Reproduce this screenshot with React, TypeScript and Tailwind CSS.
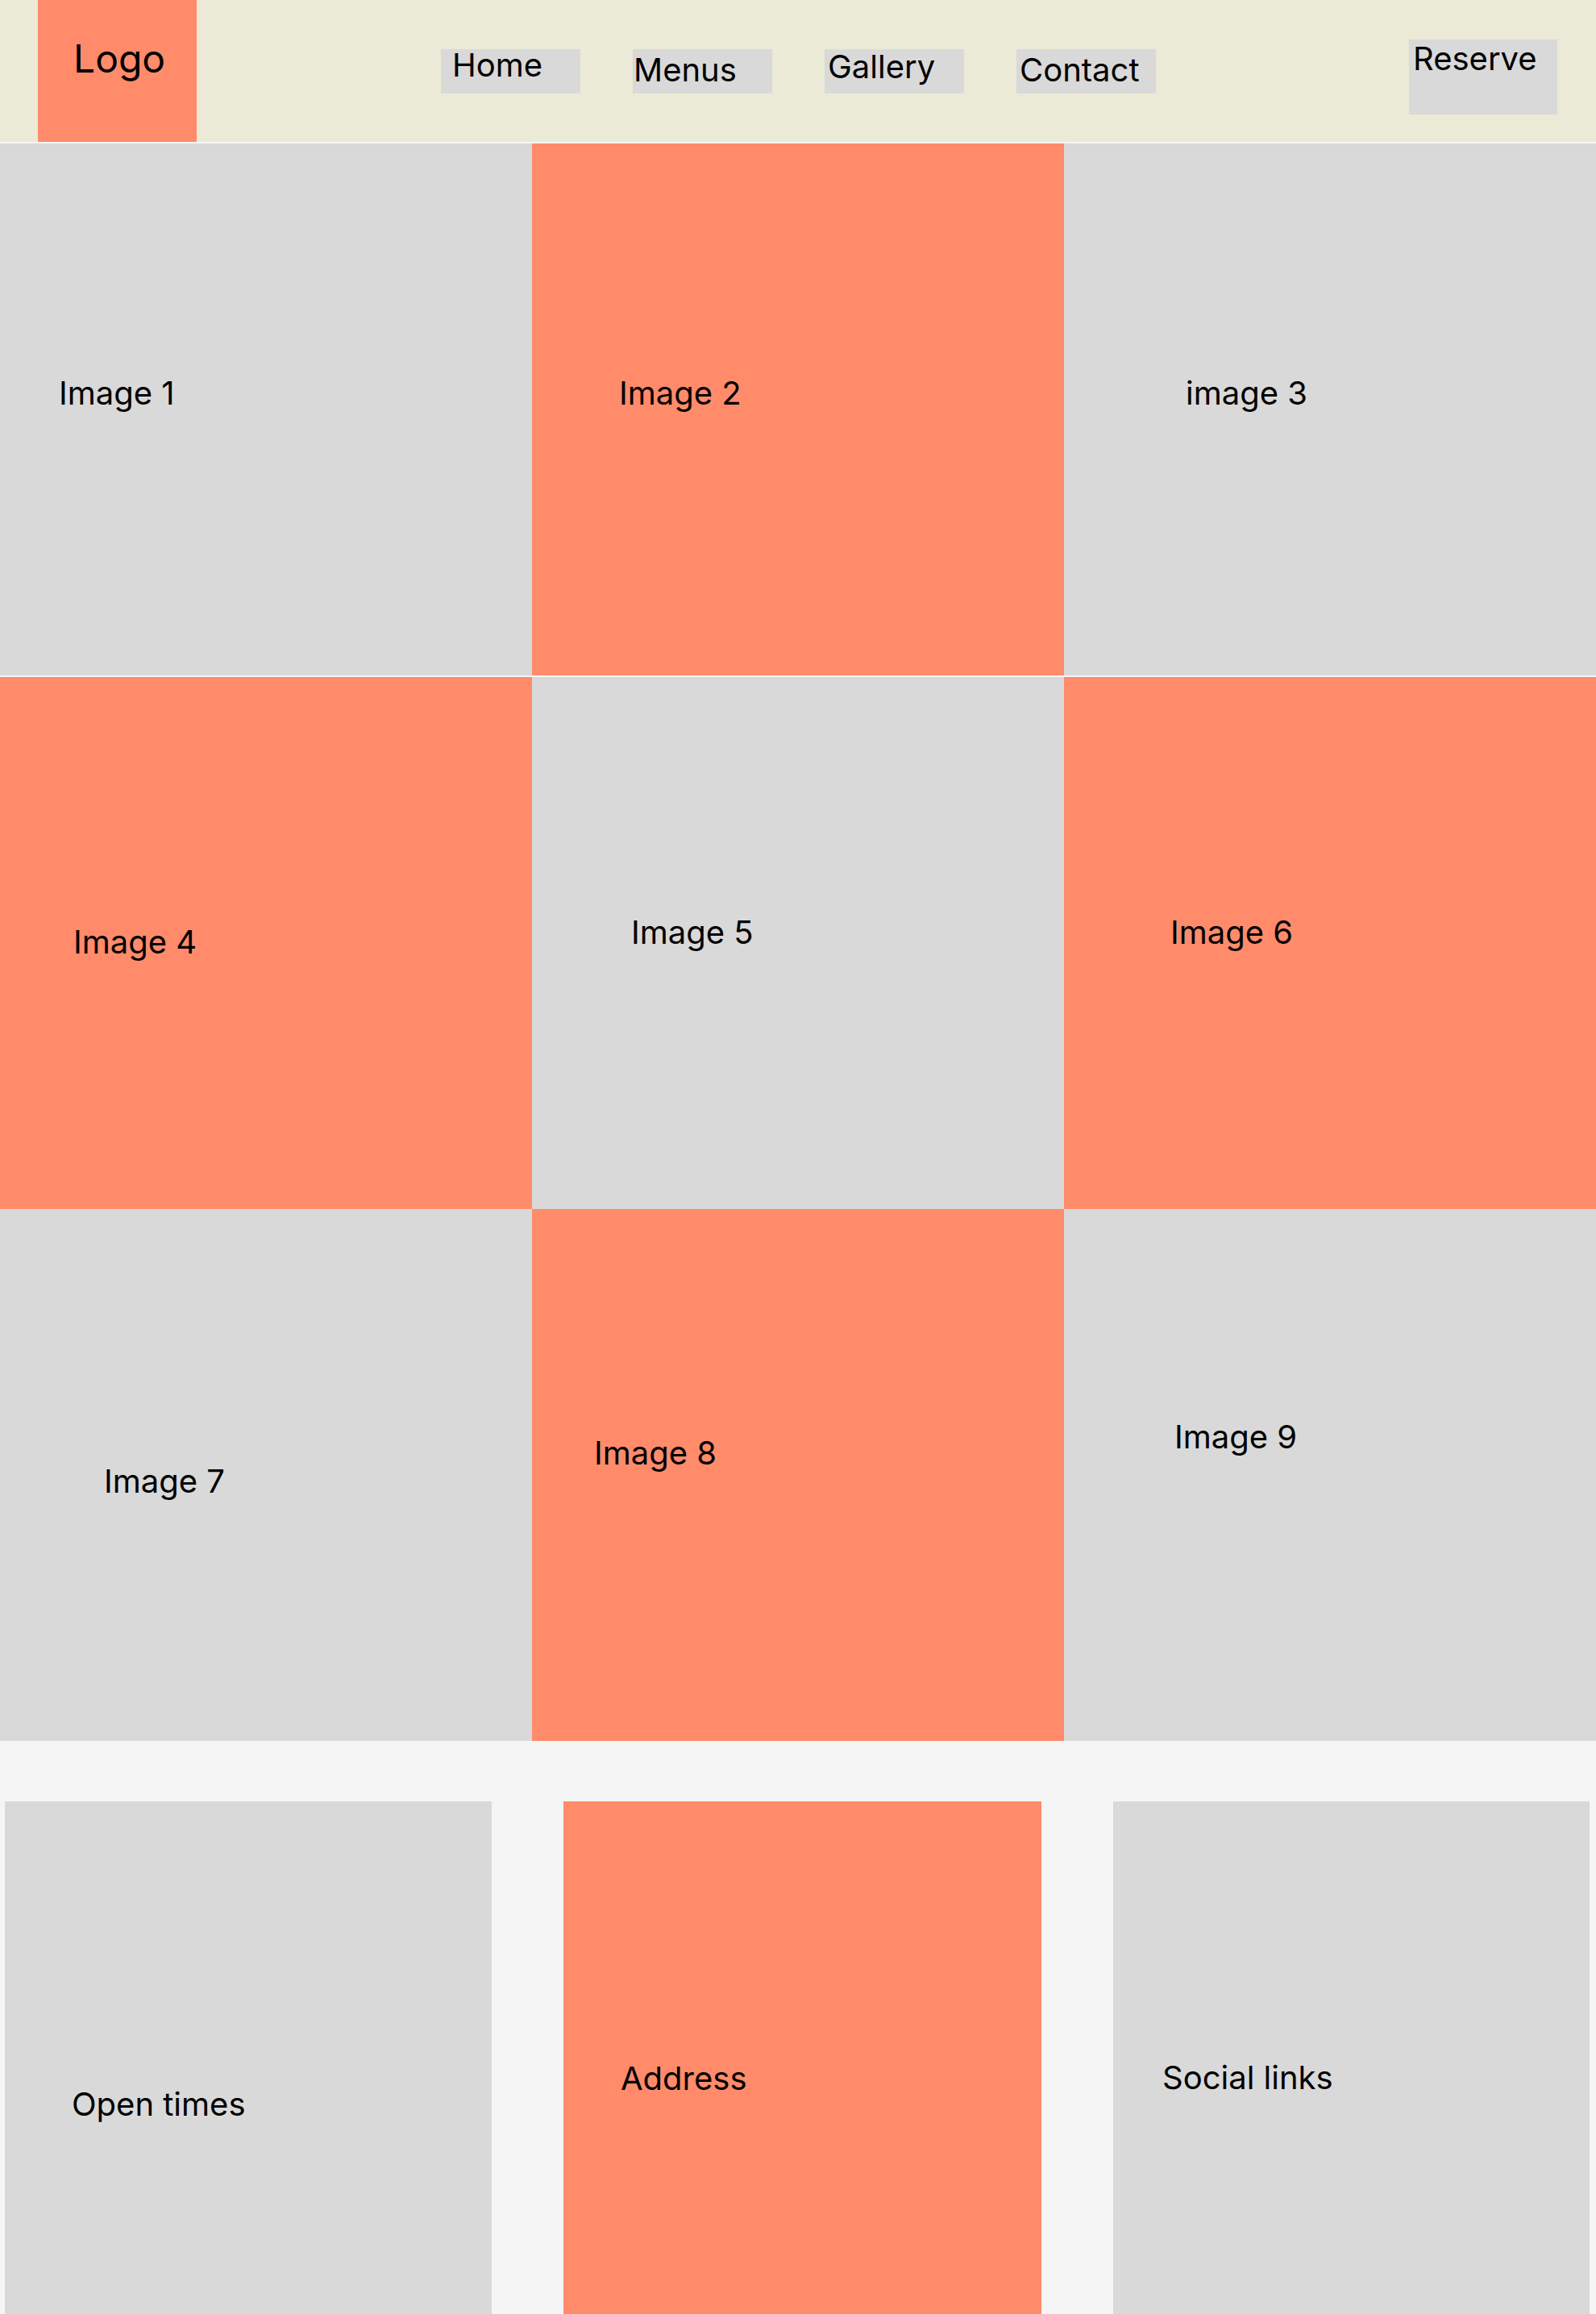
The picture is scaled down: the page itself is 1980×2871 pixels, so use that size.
import React from 'react';

const ORANGE = 'bg-[#ff8b6b]';
const GRAY = 'bg-[#d9d9d9]';

type Tile = { label: string; orange: boolean; pad: string };

const rows: Tile[][] = [
  [
    { label: 'Image 1', orange: false, pad: 'pl-[73px] pt-[280px]' },
    { label: 'Image 2', orange: true, pad: 'pl-[108px] pt-[280px]' },
    { label: 'image 3', orange: false, pad: 'pl-[151px] pt-[280px]' },
  ],
  [
    { label: 'Image 4', orange: true, pad: 'pl-[91px] pt-[299px]' },
    { label: 'Image 5', orange: false, pad: 'pl-[123px] pt-[287px]' },
    { label: 'Image 6', orange: true, pad: 'pl-[132px] pt-[287px]' },
  ],
  [
    { label: 'Image 7', orange: false, pad: 'pl-[129px] pt-[308px]' },
    { label: 'Image 8', orange: true, pad: 'pl-[77px] pt-[273px]' },
    { label: 'Image 9', orange: false, pad: 'pl-[137px] pt-[253px]' },
  ],
];

const navItems = [
  { label: 'Home', pad: 'pl-[14px] pt-0' },
  { label: 'Menus', pad: 'pl-[1px] pt-[6px]' },
  { label: 'Gallery', pad: 'pl-[4px] pt-[2px]' },
  { label: 'Contact', pad: 'pl-[4px] pt-[6px]' },
];

const Header = () => (
  <header className="flex h-[176px] bg-[#eaead6]">
    <div className={`ml-[47px] h-[176px] w-[197px] ${ORANGE} pl-[44px] pt-[37px]`}>
      <span className="text-[48px] leading-normal">Logo</span>
    </div>
    <nav className="ml-[303px] mt-[61px] flex items-start gap-[65px]">
      {navItems.map((n) => (
        <div key={n.label} className={`h-[55px] w-[173px] ${GRAY} ${n.pad}`}>
          <span className="text-[40px] leading-none">{n.label}</span>
        </div>
      ))}
    </nav>
    <div className={`ml-auto mr-[48px] mt-[49px] h-[93px] w-[184px] ${GRAY} pl-[5px] pt-[4px]`}>
      <span className="text-[40px] leading-none">Reserve</span>
    </div>
  </header>
);

const Gallery = () => (
  <section className="mt-[2px] flex flex-col">
    {rows.map((row, i) => (
      <div key={i} className={`grid grid-cols-3 ${i === 1 ? 'mt-[2px]' : ''}`}>
        {row.map((t) => (
          <div key={t.label} className={`h-[660px] ${t.orange ? ORANGE : GRAY} ${t.pad}`}>
            <span className="text-[40px] leading-normal">{t.label}</span>
          </div>
        ))}
      </div>
    ))}
  </section>
);

const Footer = () => (
  <footer className="flex items-start pt-[75px]">
    <div className={`ml-[6px] h-[636px] w-[604px] ${GRAY} pl-[83px] pt-[346px]`}>
      <span className="text-[40px] leading-normal">Open times</span>
    </div>
    <div className={`ml-[89px] h-[636px] w-[593px] ${ORANGE} pl-[71px] pt-[314px]`}>
      <span className="text-[40px] leading-normal">Address</span>
    </div>
    <div className={`ml-[89px] h-[636px] w-[591px] ${GRAY} pl-[61px] pt-[313px]`}>
      <span className="text-[40px] leading-normal">Social links</span>
    </div>
  </footer>
);

export default function App() {
  return (
    <div className="min-h-screen overflow-hidden bg-[#f5f5f5] text-black [font-family:Inter,'Noto_Sans',sans-serif]">
      <Header />
      <Gallery />
      <Footer />
    </div>
  );
}
